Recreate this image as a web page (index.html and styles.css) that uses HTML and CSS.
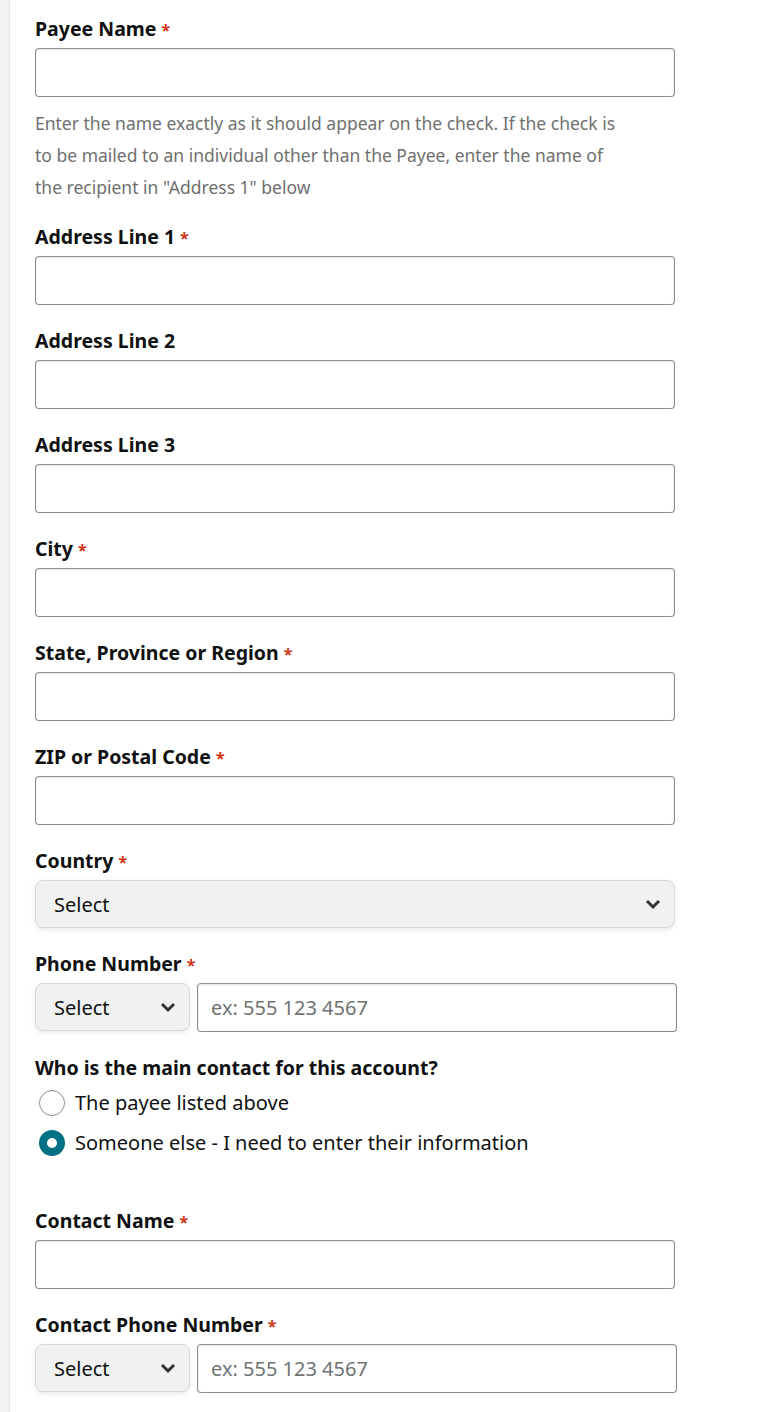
FILE: index.html
```html
<!DOCTYPE html>
<html lang="en">
<head>
    <meta charset="UTF-8">
    <meta name="viewport" content="width=device-width, initial-scale=1.0">
    <title>Payee Details</title>
    <link rel="stylesheet" href="styles.css">
</head>
<body>
    <div class="page">
        <div class="sidebar"></div>

        <!-- Payee address form -->
        <form class="payee-form">
            <div class="field">
                <label for="payeeName">Payee Name <span class="req">*</span></label>
                <input type="text" id="payeeName">
                <p class="hint">Enter the name exactly as it should appear on the check. If the check is to be mailed to an individual other than the Payee, enter the name of the recipient in "Address 1" below</p>
            </div>
            <div class="field">
                <label for="address1">Address Line 1 <span class="req">*</span></label>
                <input type="text" id="address1">
            </div>
            <div class="field">
                <label for="address2">Address Line 2</label>
                <input type="text" id="address2">
            </div>
            <div class="field">
                <label for="address3">Address Line 3</label>
                <input type="text" id="address3">
            </div>
            <div class="field">
                <label for="city">City <span class="req">*</span></label>
                <input type="text" id="city">
            </div>
            <div class="field">
                <label for="state">State, Province or Region <span class="req">*</span></label>
                <input type="text" id="state">
            </div>
            <div class="field">
                <label for="zip">ZIP or Postal Code <span class="req">*</span></label>
                <input type="text" id="zip">
            </div>
            <div class="field">
                <label for="country">Country <span class="req">*</span></label>
                <div class="dropdown wide" id="country">
                    <span>Select</span>
                    <svg class="caret" viewBox="0 0 18 18" width="18" height="18"><path d="M3 6l6 6 6-6" fill="none" stroke="#333" stroke-width="3"/></svg>
                </div>
            </div>
            <div class="field">
                <label for="phone">Phone Number <span class="req">*</span></label>
                <div class="phone-row">
                    <div class="dropdown short">
                        <span>Select</span>
                        <svg class="caret" viewBox="0 0 18 18" width="18" height="18"><path d="M3 6l6 6 6-6" fill="none" stroke="#333" stroke-width="3"/></svg>
                    </div>
                    <input type="text" id="phone" placeholder="ex: 555 123 4567">
                </div>
            </div>

            <div class="field contact-choice">
                <div class="question">Who is the main contact for this account?</div>
                <label class="radio"><span class="dot"></span>The payee listed above</label>
                <label class="radio"><span class="dot checked"></span>Someone else - I need to enter their information</label>
            </div>

            <div class="field">
                <label for="contactName">Contact Name <span class="req">*</span></label>
                <input type="text" id="contactName">
            </div>
            <div class="field">
                <label for="contactPhone">Contact Phone Number <span class="req">*</span></label>
                <div class="phone-row">
                    <div class="dropdown short">
                        <span>Select</span>
                        <svg class="caret" viewBox="0 0 18 18" width="18" height="18"><path d="M3 6l6 6 6-6" fill="none" stroke="#333" stroke-width="3"/></svg>
                    </div>
                    <input type="text" id="contactPhone" placeholder="ex: 555 123 4567">
                </div>
            </div>
        </form>
    </div>
</body>
</html>
```

FILE: styles.css
```css
body {
    font-family: "Noto Sans", Arial, sans-serif;
    margin: 0;
    padding: 0;
    background-color: #fff;
    color: #0f1111;
}
.page {
    display: flex;
    min-height: 1412px;
}
.sidebar {
    width: 9px;
    background-color: #f3f3f3;
    border-right: 1px solid #e6e6e6;
}
.payee-form {
    width: 640px;
    padding: 16px 0 0 25px;
}
.field {
    margin-bottom: 23px;
}
label,
.question {
    display: block;
    font-size: 19.5px;
    font-weight: bold;
    line-height: 26px;
    margin-bottom: 6px;
}
.req {
    color: #d13212;
    font-size: 16px;
    line-height: 1;
}
input[type="text"] {
    display: block;
    width: 100%;
    height: 49px;
    padding: 0 13px;
    font-family: inherit;
    font-size: 20px;
    border: 1px solid #888c8c;
    border-top-color: #949494;
    border-radius: 4px;
    box-shadow: 0 1px 2px rgba(15, 17, 17, 0.12) inset;
    box-sizing: border-box;
}
input::placeholder {
    color: #6f7373;
}
.hint {
    max-width: 585px;
    margin: 10px 0 -2px;
    font-size: 17.5px;
    line-height: 32px;
    color: #6f6f6f;
}
.dropdown {
    display: flex;
    align-items: center;
    justify-content: space-between;
    height: 48px;
    padding: 0 12px 0 18px;
    font-size: 20px;
    background-color: #f0f2f2;
    border: 1px solid #d5d9d9;
    border-radius: 8px;
    box-shadow: 0 2px 5px rgba(213, 217, 217, 0.5);
    box-sizing: border-box;
}
.dropdown.short {
    width: 155px;
    flex: none;
}
.phone-row {
    display: flex;
    gap: 7px;
    width: 642px;
}
.contact-choice {
    margin-top: 2px;
    margin-bottom: 45px;
}
.contact-choice .question {
    margin-bottom: 2px;
}
.radio {
    display: flex;
    align-items: center;
    gap: 10px;
    font-weight: normal;
    font-size: 20px;
    line-height: 40px;
    margin: 0 0 0 4px;
}
.dot {
    width: 26px;
    height: 26px;
    border: 1px solid #888c8c;
    border-radius: 50%;
    box-sizing: border-box;
    background-color: #fff;
}
.dot.checked {
    border: 8px solid #007185;
}
```
